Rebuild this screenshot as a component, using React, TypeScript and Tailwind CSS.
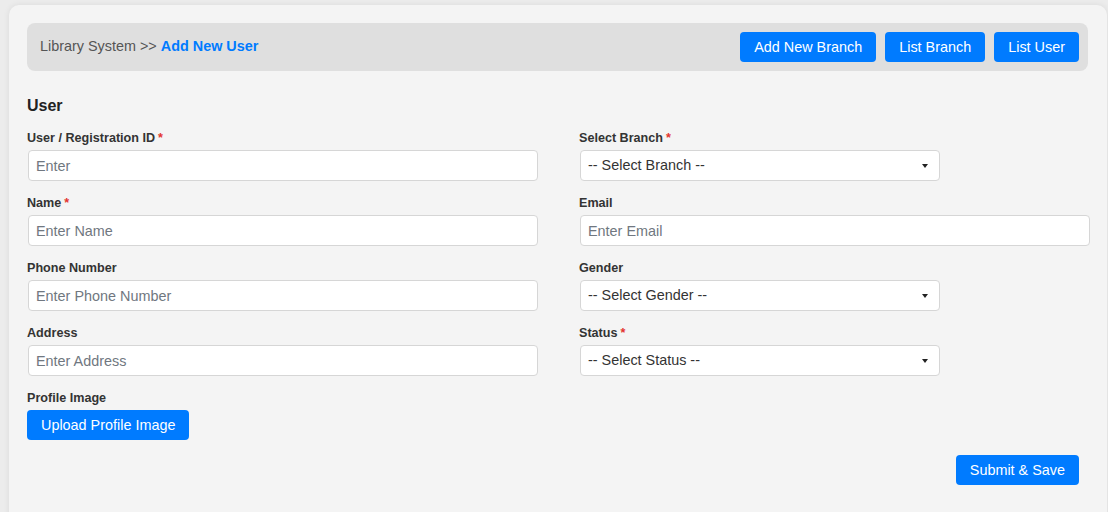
import React from "react";

const font = { fontFamily: '"Liberation Sans", Arial, sans-serif' };

function Label({ text, required }: { text: string; required?: boolean }) {
  return (
    <label className="block h-[16px] mb-[4px] text-[12.6px] leading-[16px] font-bold text-[#333]">
      {text}
      {required && <span className="text-[#e3342f] ml-[3px]">*</span>}
    </label>
  );
}

function TextField({ label, placeholder, required }: { label: string; placeholder: string; required?: boolean }) {
  return (
    <div>
      <Label text={label} required={required} />
      <input
        type="text"
        placeholder={placeholder}
        className="block w-full h-[31px] ml-px rounded-[4px] border border-[#d6d6d6] bg-white px-[7px] text-[14.4px] text-[#333] placeholder:text-[#707780] outline-none"
        style={font}
      />
    </div>
  );
}

function SelectField({ label, placeholder, required }: { label: string; placeholder: string; required?: boolean }) {
  return (
    <div>
      <Label text={label} required={required} />
      <div className="relative w-[360px] ml-px">
        <select
          className="block w-full h-[31px] appearance-none rounded-[4px] border border-[#d6d6d6] bg-white pl-[7px] pr-[24px] text-[14.4px] text-[#333] outline-none"
          style={font}
          defaultValue=""
        >
          <option value="">{placeholder}</option>
        </select>
        {/* caret */}
        <span className="pointer-events-none absolute right-[12px] top-[14px] h-0 w-0 border-x-[3px] border-t-[4px] border-x-transparent border-t-[#222]" />
      </div>
    </div>
  );
}

function BlueButton({ children, className = "" }: { children: React.ReactNode; className?: string }) {
  return (
    <button
      className={`h-[30px] rounded-[4px] bg-[#007bff] px-[14px] text-[14.4px] leading-[30px] text-white ${className}`}
      style={font}
    >
      {children}
    </button>
  );
}

export default function App() {
  return (
    <div className="min-h-[512px] bg-[#ececec] pt-[5px] pl-[9px]" style={font}>
      <div className="w-[1098px] min-h-[520px] rounded-[10px] bg-[#f4f4f4] px-[18px] pt-[18px] shadow-[0_0_6px_rgba(0,0,0,0.08)]">
        {/* Breadcrumb bar */}
        <div className="flex h-[48px] w-[1061px] items-center justify-between rounded-[8px] bg-[#dfdfdf] pl-[13px] pr-[9px]">
          <div className="text-[14.4px] text-[#555]">
            Library System &gt;&gt; <span className="font-bold text-[#007bff]">Add New User</span>
          </div>
          <div className="flex gap-[9px]">
            <BlueButton>Add New Branch</BlueButton>
            <BlueButton>List Branch</BlueButton>
            <BlueButton>List User</BlueButton>
          </div>
        </div>

        <h2 className="mt-[25px] text-[16px] leading-[20px] font-bold text-[#222]">User</h2>

        {/* Form */}
        <div className="mt-[14px] grid grid-cols-2 gap-x-[42px] gap-y-[14px]">
          <TextField label="User / Registration ID" placeholder="Enter" required />
          <SelectField label="Select Branch" placeholder="-- Select Branch --" required />
          <TextField label="Name" placeholder="Enter Name" required />
          <TextField label="Email" placeholder="Enter Email" />
          <TextField label="Phone Number" placeholder="Enter Phone Number" />
          <SelectField label="Gender" placeholder="-- Select Gender --" />
          <TextField label="Address" placeholder="Enter Address" />
          <SelectField label="Status" placeholder="-- Select Status --" required />
          <div>
            <Label text="Profile Image" />
            <BlueButton>Upload Profile Image</BlueButton>
          </div>
        </div>

        <div className="mt-[15px] flex justify-end pr-[10px]">
          <BlueButton>Submit &amp; Save</BlueButton>
        </div>
      </div>
    </div>
  );
}
